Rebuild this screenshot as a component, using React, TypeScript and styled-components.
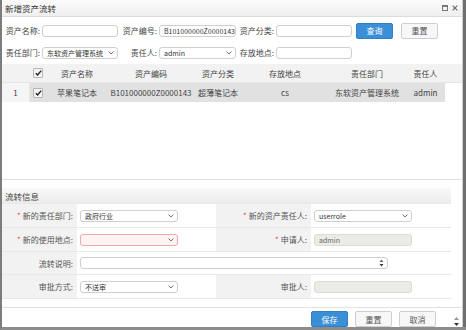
import React from "react";
import styled, { createGlobalStyle, css } from "styled-components";

const GlobalStyle = createGlobalStyle`
  html, body {
    margin: 0;
    padding: 0;
    background: #fff;
  }
  body {
    font-family: "Noto Sans CJK SC", "Liberation Sans", sans-serif;
    font-size: 8px;
    color: #444;
  }
`;

const Window = styled.div`
  width: 466px;
  height: 330px;
  box-sizing: border-box;
  border-left: 2px solid #7c7c7c;
  border-bottom: 3px solid #8c8c8c;
  display: flex;
  position: relative;
`;

const Inner = styled.div`
  width: 460px;
  border-right: 1px solid #cfcfcf;
  display: flex;
  flex-direction: column;
`;

const RightEdge = styled.div`
  width: 3px;
  background: #6f6f6f;
`;

const TitleBar = styled.div`
  height: 16px;
  border-bottom: 1px solid #dcdcdc;
  background: linear-gradient(#fbfbfb, #efefef);
  display: flex;
  align-items: center;
  justify-content: space-between;
  padding: 0 4px 0 3px;
  font-size: 8.5px;
  color: #333;
`;

const TitleTools = styled.div`
  display: flex;
  align-items: center;
  gap: 4px;
  color: #777;
`;

const SearchForm = styled.div`
  height: 47px;
  box-sizing: border-box;
  padding-top: 6px;
  display: grid;
  grid-template-columns: 40px 76px 41px 77px 40px 76px 41px 45px;
  grid-auto-rows: 15px;
  row-gap: 7px;
  align-items: center;
`;

const Label = styled.div<{ $align?: string }>`
  text-align: ${(p) => p.$align || "right"};
  padding-right: 2px;
  white-space: nowrap;
  color: #444;
`;

const fieldBase = css`
  box-sizing: border-box;
  height: 12px;
  border: 1px solid #cfcfcf;
  border-radius: 3px;
  background: #fff;
  display: flex;
  align-items: center;
  justify-content: space-between;
  gap: 2px;
  padding: 0 3px 0 4px;
  font-size: 7px;
  color: #333;
  white-space: nowrap;
  overflow: hidden;
`;

const Field = styled.div<{ $w?: number; $error?: boolean; $disabled?: boolean }>`
  ${fieldBase}
  width: ${(p) => (p.$w ? `${p.$w}px` : "100%")};
  ${(p) =>
    p.$error &&
    css`
      border-color: #f3a7a7;
      background: #fff4f4;
    `}
  ${(p) =>
    p.$disabled &&
    css`
      background: #ececE6;
      border-color: #dedbd2;
      color: #666;
    `}
`;

const FieldText = styled.span`
  overflow: hidden;
  flex: 1;
`;

const Button = styled.div<{ $primary?: boolean }>`
  box-sizing: border-box;
  width: 37px;
  height: 16px;
  display: flex;
  align-items: center;
  justify-content: center;
  font-size: 8px;
  border-radius: 2px;
  ${(p) =>
    p.$primary
      ? css`
          background: #3b8fd6;
          border: 1px solid #2f80c6;
          color: #fff;
        `
      : css`
          background: #f7f7f7;
          border: 1px solid #cfcfcf;
          color: #555;
        `}
`;

const SearchButton = styled(Button)<{ $ml: number }>`
  margin-left: ${(p) => p.$ml}px;
`;

const Grid = styled.div`
  height: 116px;
  box-sizing: border-box;
  border-bottom: 1px solid #e0e0e0;
`;

const cols = "28px 16px 62px 86px 48px 86px 78px 39px";

const GridHead = styled.div`
  height: 19px;
  background: #f2f2f2;
  border-bottom: 1px solid #e6e6e6;
  box-sizing: border-box;
  display: grid;
  grid-template-columns: ${cols};
  align-items: center;
  color: #444;
`;

const GridRow = styled.div`
  height: 19px;
  width: 443px;
  display: grid;
  grid-template-columns: ${cols};
  align-items: center;
  background: #e1e1e1;
  color: #444;
`;

const Cell = styled.div`
  text-align: center;
  white-space: nowrap;
  display: flex;
  justify-content: center;
  align-items: center;
  height: 100%;
`;

const RowNum = styled(Cell)`
  background: #f5f5f5;
  border-right: 1px solid #e6e6e6;
  box-sizing: border-box;
`;

const Check = styled.span`
  width: 8px;
  height: 8px;
  border: 1px solid #b5b5b5;
  background: #f4f4f4;
  border-radius: 1px;
  display: inline-flex;
  align-items: center;
  justify-content: center;
`;

const Lower = styled.div`
  padding: 8px 11px 0 0;
  display: flex;
  flex-direction: column;
`;

const SectionHead = styled.div`
  height: 15px;
  background: linear-gradient(#f9f9f9, #ececec);
  display: flex;
  align-items: center;
  padding-left: 3px;
  font-size: 8.5px;
  color: #444;
`;

const FormTable = styled.div`
  display: grid;
  grid-template-columns: 75px 139px 95px 140px;
  grid-template-rows: 24px 24px 23px 24px;
  border-bottom: 1px solid #e8e8e8;
`;

const FLabel = styled.div`
  background: #f2f2f2;
  border-top: 1px solid #e8e8e8;
  display: flex;
  align-items: center;
  justify-content: flex-end;
  padding-right: 4px;
  white-space: nowrap;
  color: #555;
`;

const FValue = styled.div<{ $span?: number }>`
  border-top: 1px solid #e8e8e8;
  display: flex;
  align-items: center;
  padding-left: 3px;
  grid-column: span ${(p) => p.$span || 1};
`;

const Star = styled.span`
  color: #e44;
  margin-right: 2px;
`;

const Spacer = styled.div`
  height: 8px;
`;

const Footer = styled.div`
  border-top: 1px solid #e2e2e2;
  height: 19px;
  display: flex;
  align-items: flex-end;
  padding-left: 309px;
  gap: 7px;
  position: relative;
`;

const ScrollArrows = styled.div`
  position: absolute;
  right: 3px;
  bottom: 1px;
  display: flex;
  flex-direction: column;
  gap: 3px;
`;

const Chevron = () => (
  <svg width="6" height="4" viewBox="0 0 6 4" style={{ flexShrink: 0 }}>
    <path d="M0.5 0.5 L3 3 L5.5 0.5" fill="none" stroke="#666" strokeWidth="0.9" />
  </svg>
);

const Tick = () => (
  <svg width="7" height="6" viewBox="0 0 7 6">
    <path d="M0.8 3.2 L2.6 5 L6.2 0.6" fill="none" stroke="#222" strokeWidth="1.4" />
  </svg>
);

const Spinner = () => (
  <svg width="5" height="8" viewBox="0 0 5 8" style={{ flexShrink: 0 }}>
    <path d="M2.5 0.5 L4.5 3 L0.5 3 Z" fill="#666" />
    <path d="M0.5 5 L4.5 5 L2.5 7.5 Z" fill="#333" />
  </svg>
);

const Select = ({ value, w, error }: { value?: string; w?: number; error?: boolean }) => (
  <Field $w={w} $error={error}>
    <FieldText>{value}</FieldText>
    <Chevron />
  </Field>
);

const headers = ["资产名称", "资产编码", "资产分类", "存放地点", "责任部门", "责任人"];
const row = ["苹果笔记本", "B101000000Z0000143", "超薄笔记本", "cs", "东软资产管理系统", "admin"];

export default function App() {
  return (
    <>
      <GlobalStyle />
      <Window>
        <Inner>
          <TitleBar>
            <span>新增资产流转</span>
            <TitleTools>
              <svg width="6" height="6" viewBox="0 0 6 6">
                <rect x="0.5" y="0.5" width="5" height="5" fill="none" stroke="#777" />
                <line x1="0.5" y1="1.5" x2="5.5" y2="1.5" stroke="#777" />
              </svg>
              <svg width="6" height="6" viewBox="0 0 6 6">
                <path d="M0.7 0.7 L5.3 5.3 M5.3 0.7 L0.7 5.3" stroke="#666" strokeWidth="1.1" />
              </svg>
            </TitleTools>
          </TitleBar>

          <SearchForm>
            <Label>资产名称:</Label>
            <Field />
            <Label>资产编号:</Label>
            <Field>B101000000Z0000143</Field>
            <Label>资产分类:</Label>
            <Field />
            <SearchButton $primary $ml={4}>查询</SearchButton>
            <SearchButton $ml={8}>重置</SearchButton>

            <Label>责任部门:</Label>
            <Select value="东软资产管理系统" />
            <Label>责任人:</Label>
            <Select value="admin" />
            <Label>存放地点:</Label>
            <Field />
          </SearchForm>

          <Grid>
            <GridHead>
              <Cell />
              <Cell>
                <Check>
                  <Tick />
                </Check>
              </Cell>
              {headers.map((h) => (
                <Cell key={h}>{h}</Cell>
              ))}
            </GridHead>
            <GridRow>
              <RowNum>1</RowNum>
              <Cell>
                <Check>
                  <Tick />
                </Check>
              </Cell>
              {row.map((v) => (
                <Cell key={v}>{v}</Cell>
              ))}
            </GridRow>
          </Grid>

          <Lower>
            <SectionHead>流转信息</SectionHead>
            <FormTable>
              <FLabel>
                <Star>*</Star>新的责任部门:
              </FLabel>
              <FValue>
                <Select value="政府行业" w={98} />
              </FValue>
              <FLabel>
                <Star>*</Star>新的资产责任人:
              </FLabel>
              <FValue>
                <Select value="userrole" w={98} />
              </FValue>

              <FLabel>
                <Star>*</Star>新的使用地点:
              </FLabel>
              <FValue>
                <Select w={98} error />
              </FValue>
              <FLabel>
                <Star>*</Star>申请人:
              </FLabel>
              <FValue>
                <Field $w={98} $disabled>
                  admin
                </Field>
              </FValue>

              <FLabel>流转说明:</FLabel>
              <FValue $span={3}>
                <Field $w={308}>
                  <FieldText />
                  <Spinner />
                </Field>
              </FValue>

              <FLabel>审批方式:</FLabel>
              <FValue>
                <Select value="不送审" w={98} />
              </FValue>
              <FLabel>审批人:</FLabel>
              <FValue>
                <Field $w={98} $disabled />
              </FValue>
            </FormTable>
            <Spacer />
          </Lower>

          <Footer>
            <Button $primary>保存</Button>
            <Button>重置</Button>
            <Button>取消</Button>
            <ScrollArrows>
              <svg width="5" height="3" viewBox="0 0 5 3">
                <path d="M2.5 0 L5 3 L0 3 Z" fill="#999" />
              </svg>
              <svg width="5" height="3" viewBox="0 0 5 3">
                <path d="M0 0 L5 0 L2.5 3 Z" fill="#333" />
              </svg>
            </ScrollArrows>
          </Footer>
        </Inner>
        <RightEdge />
      </Window>
    </>
  );
}
